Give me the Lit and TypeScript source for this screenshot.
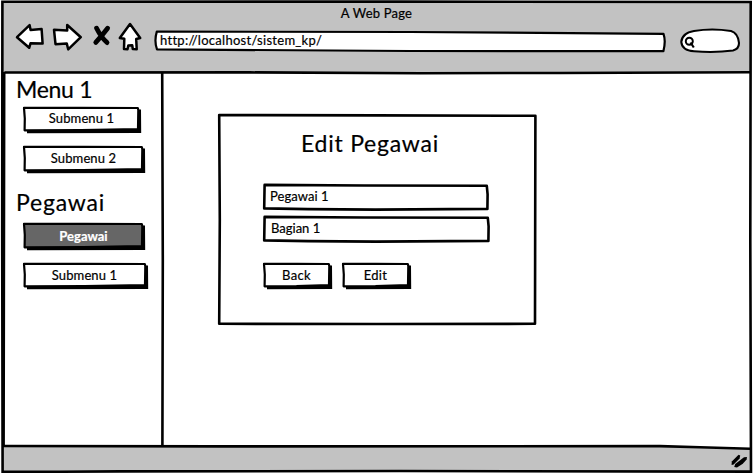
import { LitElement, html, css, svg } from "lit";
import { customElement } from "lit/decorators.js";

/** A hand-drawn panel: a wobbly outline behind ordinary slotted content. */
@customElement("sketch-box")
class SketchBox extends LitElement {
  static properties = {
    w: { type: Number },
    h: { type: Number },
    kind: { type: String },
    tone: { type: String },
  };
  declare w: number;
  declare h: number;
  declare kind: string;
  declare tone: string;

  static styles = css`
    :host { display: block; position: relative; box-sizing: border-box; }
    svg { position: absolute; left: 0; top: 0; overflow: visible; }
    .content { position: relative; height: 100%; }
    .shape { stroke: #000; stroke-width: 2.6; stroke-linejoin: round; fill: #fff; }
    .dark { fill: #666; }
    .thin { stroke-width: 2.2; }
  `;

  private outline() {
    const { w, h } = this;
    if (this.kind === "button") {
      return svg`
        <path d="M4 ${h - 1} L4 ${h + 3.2} L${w + 2.2} ${h + 3} L${w + 2} 2.4 L${w - 1} 2.4 L${w - 1} ${h - 1} Z" fill="#000"/>
        <path class="shape thin ${this.tone === "dark" ? "dark" : ""}"
          d="M1 0.8 L${w * 0.5} 0.8 L${w - 1.2} 1 L${w - 0.7} 3 L${w - 1} ${h - 0.8} L${w * 0.5} ${h + 0.2} L1.6 ${h + 0.3} L1.8 ${h * 0.5} Z"/>`;
    }
    if (this.kind === "url") {
      return svg`<path class="shape thin" d="M2.8 0.6 L${w * 0.5} 1 L${w - 2.5} 2.8 Q${w} 10 ${w - 2.6} ${h - 0.8} L${w * 0.5} ${h - 1} L3 ${h - 2.6} Q0 10 2.8 0.6 Z"/>`;
    }
    if (this.kind === "field") {
      return svg`<path class="shape" d="M1.6 0.9 L${w * 0.45} 1.5 L${w - 1.2} 1.8 L${w - 0.4} ${h * 0.4} L${w - 0.6} ${h - 1.1} L${w * 0.5} ${h - 0.4} L${w * 0.2} ${h - 0.9} L1.2 ${h - 1.6} Z"/>`;
    }
    return svg`<path class="shape" d="M1.2 1 L${w * 0.5} 1.4 L${w - 0.6} 1.8 L${w - 1} ${h - 1.2} L${w * 0.5} ${h - 1} L1.2 ${h - 1.2} L1.8 ${h * 0.5} Z"/>`;
  }

  render() {
    return html`<svg width=${this.w} height=${this.h}>${this.outline()}</svg>
      <div class="content"><slot></slot></div>`;
  }
}

@customElement("app-root")
class AppRoot extends LitElement {
  static styles = css`
    :host {
      display: block; position: relative; width: 753px; height: 474px; overflow: hidden;
      background: #fff; color: #000;
      font: 13px/16px Lato, "Open Sans", sans-serif;
      -webkit-text-stroke: 0.2px currentColor;
    }
    .chrome { position: absolute; left: 0; top: 0; }
    .page { position: relative; display: flex; flex-direction: column; height: 474px; }
    header { height: 73px; display: flex; flex-direction: column; }
    .title { margin-top: 5px; text-align: center; letter-spacing: 0.2px; height: 17px; }
    .tools { display: flex; padding-left: 16px; height: 30px; }
    .tools svg { display: block; flex: none; overflow: visible; }
    .ink { fill: #fff; stroke: #000; stroke-width: 2.5; stroke-linejoin: round; stroke-linecap: round; }
    .pill { stroke-width: 2.1; }
    .fwd { margin-left: 8px; }
    .stop { margin-left: 10px; }
    .home { margin-left: 7px; }
    .url { margin: 9px 0 0 12px; width: 512px; height: 21px; flex: none; }
    .url span { display: block; padding: 1px 0 0 6px; letter-spacing: 0.28px; }
    .search { margin-left: 14px; }
    .main { flex: 1; display: flex; }
    nav { width: 163px; box-sizing: border-box; padding: 2px 0 0 16px; }
    h2 { margin: 0; font-size: 23px; line-height: 28px; font-weight: 400; letter-spacing: 0.8px; }
    h2.first { letter-spacing: -0.3px; }
    nav sketch-box { margin-left: 7px; text-align: center; line-height: 24px; letter-spacing: 0.12px; height: 25px; }
    nav .b1 { width: 117px; margin-top: 4px; line-height: 22px; }
    nav .b2 { width: 121px; margin-top: 14px; }
    nav .b3 { width: 121px; margin-top: 7px; color: #fff; font-weight: 700; line-height: 26px; letter-spacing: 0; }
    nav .b4 { width: 123px; margin-top: 15px; }
    .second { margin-top: 17px; }
    .canvas { flex: 1; padding: 41px 0 0 55px; }
    .card { width: 318px; height: 211px; }
    .card h2 { padding-top: 15px; text-align: center; margin-left: -14px; letter-spacing: 0.75px; }
    .field { margin-left: 45px; width: 225px; height: 26px; letter-spacing: 0.05px; }
    .field span { display: block; padding: 4px 0 0 7px; }
    .f1 { margin-top: 27px; }
    .f2 { margin-top: 6px; width: 226px; }
    .f2 span { padding-left: 8px; letter-spacing: 0; }
    .actions { display: flex; gap: 12px; margin: 21px 0 0 45px; }
    .actions sketch-box { width: 67px; height: 25px; line-height: 24px; text-align: center; letter-spacing: 0.3px; }
    footer { height: 28px; display: flex; justify-content: flex-end; padding: 8px 5px 0 0; box-sizing: border-box; }
  `;

  render() {
    return html`
      <svg class="chrome" width="753" height="474" fill="none" stroke="#000" stroke-width="2.6">
        <path d="M3 2 H750.5 V72.5 H3 Z" fill="#c2c2c2" stroke="none"/>
        <path d="M3 446 H660 L750 448.5 V471.5 H3 Z" fill="#c2c2c2" stroke="none"/>
        <path d="M2.4 1.8 L400 1.6 L750.7 2 L750.3 240 L751 471.6 L400 471 L120 471.4 L60 471.8 L2.6 471.6 L2.2 230 Z"/>
        <path d="M4.4 72.5 L250 72.4 L420 73.2 L560 73 L750 72.2 M4.2 72 L3.6 446"/>
        <path d="M162.2 73 L162.8 260 L162.4 446"/>
        <path d="M3 446 L220 446.4 L660 446.1 L700 447.2 L750 448.7"/>
      </svg>
      <div class="page">
        <header>
          <div class="title">A Web Page</div>
          <div class="tools">
            <svg width="28" height="30" viewBox="16 22 28 30"><path class="ink" d="M17 37.2 L29.6 25.2 L30.6 30 L41.6 29 L42.6 43.5 L30.5 43.3 L29.2 47.8 Z"/></svg>
            <svg class="fwd" width="30" height="30" viewBox="52 22 30 30"><path class="ink" d="M54 29.7 L67.2 30.5 L67.2 25 L80.8 37.2 L68.2 49.3 L66.8 43.6 L55.5 44.2 Z"/></svg>
            <svg class="stop" width="19" height="30" viewBox="92 22 19 30"><path d="M96.6 28.2 Q101 37 107 42.6 M107.6 28.2 Q102 35.5 95.8 42.4" fill="none" stroke="#000" stroke-width="4.8" stroke-linecap="round"/></svg>
            <svg class="home" width="24" height="30" viewBox="118 22 24 30"><path class="ink" d="M130 24 L119.8 38 L124.3 38.8 L124 49 L127.5 49.2 L128.3 45.5 L132.2 45.3 L132.8 49 L136.7 49.2 L136.2 39 L140.2 38 Z"/></svg>
            <sketch-box class="url" .w=${512} .h=${21} kind="url"><span>http://localhost/sistem_kp/</span></sketch-box>
            <svg class="search" width="60" height="30" viewBox="680 22 60 30">
              <path class="ink pill" d="M681.3 42 Q682 33 694 31 Q712 28 731 31 Q738 33 739 43 Q739 49 733 50.5 Q715 53 694 51.3 Q682 50.5 681.3 42 Z"/>
              <circle cx="689.3" cy="41.2" r="3.5" fill="none" stroke="#000" stroke-width="2"/>
              <path d="M690.5 42.5 L693.8 47.5" stroke="#000" stroke-width="2.2"/>
            </svg>
          </div>
        </header>
        <div class="main">
          <nav>
            <h2 class="first">Menu 1</h2>
            <sketch-box class="b1" .w=${116} .h=${23} kind="button">Submenu 1</sketch-box>
            <sketch-box class="b2" .w=${120} .h=${24} kind="button">Submenu 2</sketch-box>
            <h2 class="second">Pegawai</h2>
            <sketch-box class="b3" .w=${120} .h=${24} kind="button" tone="dark">Pegawai</sketch-box>
            <sketch-box class="b4" .w=${123} .h=${23} kind="button">Submenu 1</sketch-box>
          </nav>
          <div class="canvas">
            <sketch-box class="card" .w=${318} .h=${211} kind="card">
              <h2>Edit Pegawai</h2>
              <sketch-box class="field f1" .w=${225} .h=${26} kind="field"><span>Pegawai 1</span></sketch-box>
              <sketch-box class="field f2" .w=${226} .h=${26} kind="field"><span>Bagian 1</span></sketch-box>
              <div class="actions">
                <sketch-box .w=${67} .h=${23} kind="button">Back</sketch-box>
                <sketch-box .w=${67} .h=${23} kind="button">Edit</sketch-box>
              </div>
            </sketch-box>
          </div>
        </div>
        <footer>
          <svg width="17" height="14" viewBox="731 454 17 14" fill="#000">
            <path d="M731.6 465 L731.8 461.6 L738.6 454.8 L740.2 455.4 L739.6 458.4 L733.6 464.6 Z"/>
            <path d="M734.2 467 L735.2 464 L744 457.2 L747 457 L746.6 459.6 L742.8 463.8 L737 467.6 Z"/>
          </svg>
        </footer>
      </div>`;
  }
}
